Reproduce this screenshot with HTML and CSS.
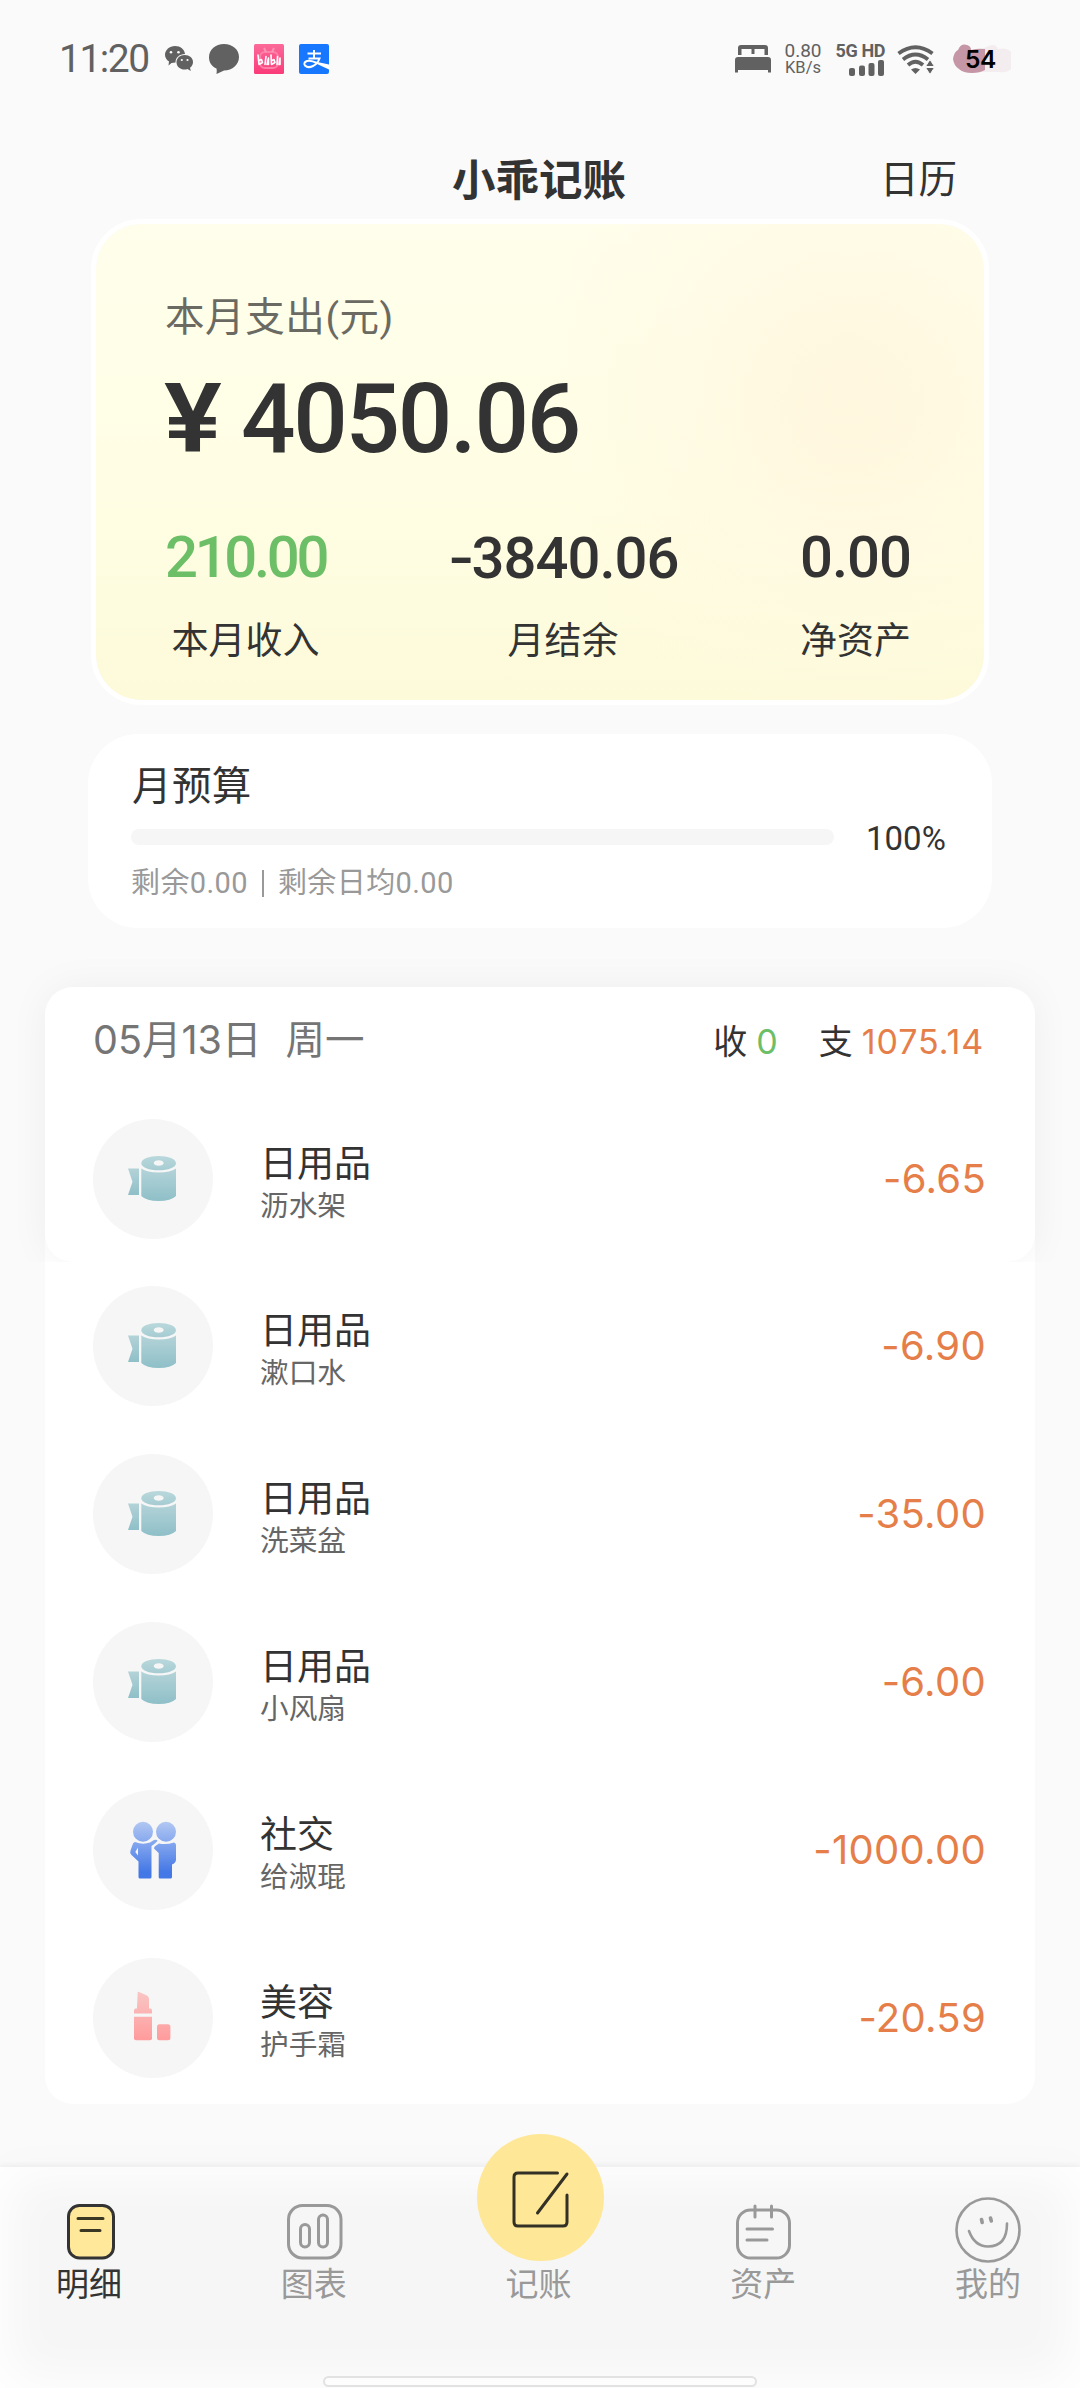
FILE: index.html
```html
<!DOCTYPE html>
<html lang="zh-CN">
<head>
<meta charset="utf-8">
<title>小乖记账</title>
<link rel="stylesheet" href="styles.css">
</head>
<body>
<svg class="defs" width="0" height="0" aria-hidden="true">
  <defs>
    <linearGradient id="teal" x1="0" y1="0" x2="0" y2="1"><stop offset="0" stop-color="#b3d3d8"/><stop offset="1" stop-color="#8fbfc8"/></linearGradient>
    <linearGradient id="tealTop" x1="0" y1="0" x2="0" y2="1"><stop offset="0" stop-color="#b9d8dc"/><stop offset="1" stop-color="#a5ccd2"/></linearGradient>
    <linearGradient id="blue" gradientUnits="userSpaceOnUse" x1="0" y1="31" x2="0" y2="82"><stop offset="0" stop-color="#b4c9f3"/><stop offset="1" stop-color="#4478e6"/></linearGradient>
    <linearGradient id="pink" gradientUnits="userSpaceOnUse" x1="0" y1="34" x2="0" y2="82"><stop offset="0" stop-color="#f9c6c4"/><stop offset="1" stop-color="#ff9b9c"/></linearGradient>
    <linearGradient id="bili" x1="0" y1="0" x2="0" y2="1"><stop offset="0" stop-color="#fb6a9a"/><stop offset="1" stop-color="#fa3b79"/></linearGradient>
    <symbol id="tissue" viewBox="0 0 120 120">
      <path fill="url(#teal)" d="M35 49.500H46V76H35L39.500 62.700Z"/>
      <path fill="url(#teal)" d="M48.300 49.500Q54 53.500 65.700 53.500T83 49.500V77Q78 82 65.700 82T48.300 77Z"/>
      <path fill="url(#tealTop)" fill-rule="evenodd" d="M65.700 37C75.300 37 83 40 83 44.200S75.300 51.300 65.700 51.300S48.300 48.300 48.300 44.200S56.100 37 65.700 37ZM65.700 41.300C63 41.300 60.700 42.500 60.700 44S63 46.700 65.700 46.700S70.700 45.500 70.700 44S68.400 41.300 65.700 41.300Z"/>
    </symbol>
    <symbol id="people" viewBox="0 0 120 120">
      <g fill="url(#blue)"><circle cx="50" cy="41.700" r="10"/><circle cx="73" cy="41.700" r="10"/>
      <path fill-rule="evenodd" d="M42 52Q50 55 57 52.500L61 50Q64 49.300 64.500 50.500Q64 52 58.500 56V87Q58.500 88.500 57 88.500H47Q45.500 88.500 45.500 87V71.500L38.500 65Q36.500 62.500 37.500 60.500L40 53.500Q41 52 42 52ZM45 57.500L42.300 62L45 65.500Z"/>
      <path d="M66 53.500Q73 55 81 52.500Q83 53 83 55V70Q82.500 73 79 74.500V87Q79 88.500 77.500 88.500H67Q65.700 88.500 65.700 87V63L61 58.500Q61 56.500 63 55.500Z"/></g>
    </symbol>
    <symbol id="lipstick" viewBox="0 0 120 120">
      <g fill="url(#pink)"><path d="M44.700 34.500Q44.700 33.500 46 34L53.500 37.200Q56 38.500 56 41V50.500H57.500Q59 51 59 52.500V55.500H41V52.500Q41 51 42.500 50.500H44V49Z"/>
      <path d="M41 58.700H59V80.300Q59 82.300 57 82.300H43Q41 82.300 41 80.300Z"/><rect x="64" y="66.300" width="13.400" height="16" rx="2.500"/></g>
    </symbol>
  </defs>
</svg>

<header class="status">
  <div class="status-left">
    <span class="clock">11:20</span>
    <svg class="wechat" width="28" height="26" viewBox="0 0 28 26"><path fill="#616161" d="M10 0C15.500 0 19.500 3.500 20 8C14.500 8 10.500 11.500 10.500 16.500L6.500 17L3.500 19.500L4 15.500C1.500 14 0 11.500 0 8.800C0 4 4.500 0 10 0Z"/><path fill="#616161" d="M19.700 9C24.500 9 28 12.200 28 16C28 18.500 26.800 20.500 25 21.800L25.800 25L22.500 23Q21 23.600 19.700 23.600C15 23.600 11.500 20.500 11.500 16.300S15 9 19.700 9Z"/><g fill="#fafafa"><circle cx="6" cy="6.200" r="1.300"/><circle cx="13.500" cy="6.200" r="1.300"/><circle cx="16.800" cy="14" r="1.100"/><circle cx="22.500" cy="14" r="1.100"/></g></svg>
    <svg class="bubble" width="30" height="30" viewBox="0 0 30 30"><path fill="#616161" d="M15 0C23.500 0 30 5.500 30 13S23.500 26.500 15 26.500Q13.500 27 7.500 30Q8 26.500 7.500 24.500C3 22.500 0 18.500 0 13.500C0 5.500 6.500 0 15 0Z"/></svg>
    <svg class="bili" width="30" height="30" viewBox="0 0 30 30"><rect width="30" height="30" rx="1.500" fill="url(#bili)"/><rect x="6" y="8" width="18" height="16" rx="5" fill="none" stroke="#fc80a8" stroke-width="2"/><path d="M10 4l2 4M20 4l-2 4" stroke="#fc94b6" stroke-width="2"/><path fill="none" stroke="#fff" stroke-width="1.600" stroke-linecap="round" stroke-linejoin="round" d="M4 11L5 20.500L8.500 18.500L7.500 15.500L5 16.500M11 20.500L12 12.500M13 20.500L14.500 14V20.500M17 11L17.500 20.500L21 18.500L20 15.500L18 16.500M23 20.500L23.500 12.500M25 20.500L26 14V20.500"/></svg>
    <svg class="alipay" width="30" height="30" viewBox="0 0 30 30"><rect width="30" height="30" rx="2" fill="#1777ff"/><path fill="none" stroke="#fff" stroke-width="2" d="M8.500 9.500H22M15 6V14.500M9.500 14.500H20.500Q18.500 20 14 22Q9 24.500 6 21.500Q4 18.500 8 17Q12 16 18 19.200"/><path fill="#fff" d="M16 17.500L30 20.500V25.500L17 19.500Z"/></svg>
  </div>
  <div class="status-right">
    <svg class="bed" width="36" height="28" viewBox="0 0 36 28"><path fill="#616161" d="M3 10V3Q3 0 6 0H30Q33 0 33 3V10H29.500V4H19.500V9H16.500V4H6.500V10ZM3 12H33Q36 12 36 15V27.500H33V25H3V27.500H0V15Q0 12 3 12Z"/></svg>
    <div class="speed"><span>0.80</span><span class="unit">KB/s</span></div>
    <div class="cell"><span>5G HD</span><svg width="36" height="16" viewBox="0 0 36 16"><g fill="#616161"><rect y="8" width="6" height="8" rx="2"/><rect x="10" y="5.500" width="6" height="10.500" rx="2"/><rect x="19.500" y="3" width="6" height="13" rx="2"/><rect x="29" width="6" height="16" rx="2"/></g></svg></div>
    <svg class="wifi" width="38" height="29" viewBox="0 0 38 29"><g fill="none" stroke="#616161" stroke-width="3.800"><path d="M1.500 8.500Q18.500 -4 35.500 8.500"/><path d="M6 14.500Q18.500 4.500 31 14.500"/><path d="M11 20Q18.500 13.500 26 20"/></g><path fill="#616161" d="M14 24.500Q18.500 21.500 23 24.500L18.500 29Z"/><path fill="#616161" stroke="#fafafa" stroke-width="1" d="M28.500 21.500L33 14.500L37.500 21.500ZM28.500 22.500H37.500L33 29.500Z"/></svg>
    <div class="battery"><svg width="58" height="30" viewBox="0 0 58 30"><path fill="#f3edef" d="M28 6Q32 3 36 2Q42 -1 45 5Q54 3 58 8V25Q54 29 46 28H28Z"/><path fill="#c596a5" d="M5 6Q8 -1 14 1Q18 2 18 6Q25 4 32 5V26Q27 29 19 29Q10 29 6 25Q1 22 0 15Q1 8 5 6Z"/></svg><span>54</span></div>
  </div>
</header>

<div class="titlebar"><h1>小乖记账</h1><a class="calendar">日历</a></div>

<section class="summary">
  <div class="caption">本月支出(元)</div>
  <div class="total"><span class="yen">¥</span><span>4050.06</span></div>
  <div class="stats">
    <div class="stat"><b class="income">210.00</b><span>本月收入</span></div>
    <div class="stat balance"><b><i class="minus">-</i>3840.06</b><span>月结余</span></div>
    <div class="stat"><b>0.00</b><span>净资产</span></div>
  </div>
</section>

<section class="budget">
  <div class="budget-title">月预算</div>
  <div class="budget-row"><div class="bar"></div><span>100%</span></div>
  <div class="budget-note"><span>剩余0.00</span><i></i><span>剩余日均0.00</span></div>
</section>

<section class="list">
  <div class="day">
    <div class="day-head">
      <span class="date">05月13日</span><span class="week">周一</span>
      <span class="sum in">收<b>0</b></span><span class="sum out">支<b>1075.14</b></span>
    </div>
    <div class="row"><div class="ico"><svg><use href="#tissue"/></svg></div><div class="name"><p>日用品</p><small>沥水架</small></div><div class="amt">-6.65</div></div>
  </div>
  <div class="row"><div class="ico"><svg><use href="#tissue"/></svg></div><div class="name"><p>日用品</p><small>漱口水</small></div><div class="amt">-6.90</div></div>
  <div class="row"><div class="ico"><svg><use href="#tissue"/></svg></div><div class="name"><p>日用品</p><small>洗菜盆</small></div><div class="amt">-35.00</div></div>
  <div class="row"><div class="ico"><svg><use href="#tissue"/></svg></div><div class="name"><p>日用品</p><small>小风扇</small></div><div class="amt">-6.00</div></div>
  <div class="row"><div class="ico"><svg><use href="#people"/></svg></div><div class="name"><p>社交</p><small>给淑琨</small></div><div class="amt">-1000.00</div></div>
  <div class="row"><div class="ico"><svg><use href="#lipstick"/></svg></div><div class="name"><p>美容</p><small>护手霜</small></div><div class="amt">-20.59</div></div>
</section>

<nav class="tabs">
  <div class="tab active"><svg width="66" height="66" viewBox="0 0 66 66"><rect x="12.500" y="8.500" width="45" height="52.500" rx="11" fill="#ffe89a" stroke="#333" stroke-width="3"/><path d="M22 21.500H47M25 33.500H44" stroke="#3b3725" stroke-width="3" stroke-linecap="round"/></svg><span>明细</span></div>
  <div class="tab"><svg width="66" height="66" viewBox="0 0 66 66"><g fill="none" stroke="#999" stroke-width="3"><rect x="7.500" y="8.500" width="52.500" height="52.500" rx="14"/><rect x="19.500" y="27.500" width="9" height="22.500" rx="4.500"/><rect x="37.500" y="18" width="9" height="32" rx="4.500"/></g></svg><span>图表</span></div>
  <div class="tab"><div class="gap"></div><span>记账</span>
    <div class="add"><svg width="127" height="127" viewBox="0 0 127 127"><path fill="none" stroke="#333125" stroke-width="3" stroke-linecap="round" d="M80.500 39H41Q37 39 37 43V88Q37 92 41 92H86Q90 92 90 88V61M90 40L60.500 79"/></svg></div>
  </div>
  <div class="tab"><svg width="66" height="66" viewBox="0 0 66 66"><g fill="none" stroke="#999" stroke-width="3" stroke-linecap="round"><rect x="7.500" y="13" width="52" height="48" rx="13"/><path d="M25 9V20M41.500 9V20M17 32H42.500M17 43H37"/></g></svg><span>资产</span></div>
  <div class="tab"><svg width="66" height="66" viewBox="0 0 66 66"><g fill="none" stroke="#999" stroke-width="2.600" stroke-linecap="round"><circle cx="33" cy="33" r="31.500"/><path d="M14 34C18 45 25 49.500 33 49.500C45 49.500 52 42 52 26.500"/><path stroke-width="3.600" d="M26.500 22.500L27.200 25.500M35.500 21L36.300 24"/></g></svg><span>我的</span></div>
  <div class="home"></div>
</nav>
</body>
</html>
```
FILE: styles.css
```css
* { box-sizing: border-box; margin: 0; padding: 0; }
body {
  width: 1080px; height: 2388px; overflow: hidden;
  display: flex; flex-direction: column;
  background: #fafafa; color: #333;
  font-family: Roboto, "Noto Sans CJK SC", sans-serif;
}
.defs { position: absolute; }
svg { display: block; flex: none; }
i, b, small { font-style: normal; font-weight: inherit; font-size: inherit; }

.status { height: 118px; display: flex; justify-content: space-between; padding: 0 69px 0 59px; color: #616161; }
.status-left, .status-right { display: flex; height: 118px; align-items: center; }
.clock { width: 106px; font-size: 39px; letter-spacing: -1.5px; }
.bubble { margin-left: 16px; }
.bili, .alipay { margin-left: 15px; }
.speed { margin-left: 12px; width: 40px; display: flex; flex-direction: column; align-items: center; font-size: 19px; line-height: 18px; }
.speed .unit { font-size: 16.500px; line-height: 16px; }
.cell { margin-left: 12px; width: 50px; display: flex; flex-direction: column; align-items: flex-end; font-size: 18px; line-height: 18px; font-weight: 700; white-space: nowrap; letter-spacing: -.4px; }
.wifi { margin-left: 12px; }
.battery { margin-left: 18px; position: relative; }
.battery span { position: absolute; left: 12px; top: 0; font: 600 24.500px/30px Inter, sans-serif; letter-spacing: -.5px; color: #000; }

.titlebar { height: 101px; display: grid; grid-template-columns: 1fr auto 1fr; align-items: start; padding: 0 123px 0 121px; line-height: 60px; }
.titlebar h1 { grid-column: 2; font-size: 43.500px; font-weight: 700; margin-top: 34px; height: 60px; }
.calendar { justify-self: end; font-size: 38.500px; margin-top: 32px; height: 60px; }

.summary {
  width: 898px; height: 486px; margin-left: 91px; flex: none;
  border: 5px solid #fff; border-radius: 50px;
  padding: 66px 69px 0;
  background: radial-gradient(circle 320px at 755px 180px, rgba(255,245,220,.8), rgba(255,248,226,.5) 55%, rgba(255,253,232,0)), linear-gradient(#fffeec, #fffee4 55%, #fdfada);
  background-clip: padding-box;
}
.caption { font-size: 39.500px; line-height: 56px; color: #6b6a62; letter-spacing: .6px; }
.total { display: flex; font-size: 96px; line-height: 110px; font-weight: 500; letter-spacing: -2.300px; margin-top: 18px; }
.total .yen { width: 77px; font-weight: 600; letter-spacing: 0; margin-left: -1px; transform: scaleX(1.13); transform-origin: left; }
.stats { display: flex; justify-content: space-between; margin-top: 48px; margin-right: 4px; }
.stat { display: flex; flex-direction: column; align-items: center; }
.stat b { font-size: 58px; line-height: 70px; height: 70px; font-weight: 500; letter-spacing: -1px; }
.stat span { font-size: 37px; line-height: 50px; margin-top: 25px; }
.stat .income { color: #6cbe67; letter-spacing: -3.300px; }
.minus { font-family: Inter, sans-serif; letter-spacing: -3px; }

.budget { width: 904px; height: 194px; margin: 29px 0 0 88px; flex: none; background: #fff; border-radius: 50px; padding: 25px 45px 0 44px; }
.budget-title { font-size: 39.500px; line-height: 56px; letter-spacing: .4px; }
.budget-row { display: flex; align-items: center; height: 46px; margin-left: -1px; font-size: 33px; }
.bar { width: 703px; height: 16px; border-radius: 8px; background: #f6f6f6; margin-right: 32px; margin-bottom: 2px; }
.budget-note { display: flex; align-items: center; font-size: 29px; line-height: 44px; color: #999; letter-spacing: .4px; margin-left: -1px; }
.budget-note i { width: 2px; height: 27px; background: #999; margin: 0 14px; }

.list { width: 990px; height: 1117px; margin: 59px 0 0 45px; flex: none; background: #fff; border-radius: 28px; }
.day { height: 275px; border-radius: 28px; background: #fff; box-shadow: 0 0 40px rgba(0,0,0,.05); clip-path: inset(-60px -60px 0 -60px); }
.day-head { height: 108px; display: flex; align-items: baseline; padding: 23px 51px 0 48px; line-height: 60px; font-family: Inter, "Noto Sans CJK SC", sans-serif; font-size: 39.500px; color: #757575; }
.week { margin-left: 24px; }
.sum { font-size: 34px; color: #333; display: flex; align-items: baseline; gap: 9px; }
.in { margin-left: auto; }
.out { margin-left: 41px; }
.in b { color: #6cbe67; }
.out b, .amt { color: #e57e48; }
.out b { letter-spacing: .9px; }
.row { height: 168px; display: flex; align-items: center; padding: 0 49px 0 48px; }
.ico { width: 120px; height: 120px; border-radius: 50%; background: #f6f6f6; }
.ico svg { width: 120px; height: 120px; }
.name { margin-left: 47px; padding-top: 5px; }
.name p { font-size: 37px; line-height: 48px; }
.name small { display: block; font-size: 28.700px; line-height: 34px; color: #666; }
.amt { margin-left: auto; font-family: Inter, sans-serif; font-size: 40px; line-height: 48px; letter-spacing: .3px; }

.tabs { position: relative; margin-top: 63px; height: 221px; flex: none; display: flex; justify-content: space-between; padding: 30px 59px 0 56px; background: #f6f6f6; box-shadow: inset 0 0 50px 8px #fff, 0 -2px 6px rgba(0,0,0,.05), 0 -4px 40px rgba(0,0,0,.02); }
.tab { width: 66px; display: flex; flex-direction: column; align-items: center; font-size: 33px; color: #999; white-space: nowrap; }
.tab span { line-height: 44px; }
.active { color: #333; }
.gap { height: 66px; }
.add { position: absolute; left: 477px; top: -33px; width: 127px; height: 127px; border-radius: 50%; background: #ffe798; }
.home { position: absolute; left: 323px; bottom: 1px; width: 434px; height: 11px; border: 2px solid #e2e2e2; border-radius: 6px; background: #fdfdfd; }
```
